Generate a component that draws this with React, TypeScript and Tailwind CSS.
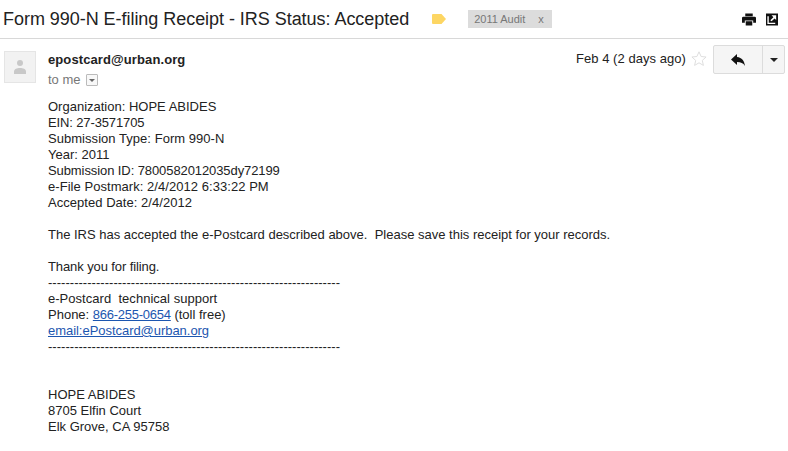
const rule = "-".repeat(67);

function Avatar() {
  return (
    <div className="flex h-[32px] w-[32px] shrink-0 items-end justify-center border border-[#e5e5e5] bg-[#f2f2f2]">
      <svg width="14" height="16" viewBox="0 0 14 16" className="mb-[7px]">
        <circle cx="7" cy="4" r="3" fill="#c8c8c8" />
        <path d="M1 15v-2.500C1 10 4 9 7 9s6 1 6 3.500V15z" fill="#c8c8c8" />
      </svg>
    </div>
  );
}

function ReplyButton() {
  return (
    <div className="flex h-[29px] items-stretch rounded-[2px] border border-[#dcdcdc] bg-[#f5f5f5]">
      <div className="flex w-[49px] items-center justify-center border-r border-[#dcdcdc]">
        <svg width="14" height="12" viewBox="0 0 14 12">
          <path d="M6 0v3c5 .5 7.300 3.800 8 9-1.800-3-4-4-8-4v3L0 5.500z" fill="#111" />
        </svg>
      </div>
      <div className="flex w-[21px] items-center justify-center">
        <div className="h-0 w-0 border-x-[4px] border-t-[4px] border-x-transparent border-t-[#222]" />
      </div>
    </div>
  );
}

export default function App() {
  return (
    <div className="h-[451px] w-[788px] overflow-hidden bg-white font-['Liberation_Sans',Arial,sans-serif] text-[#222]">
      <header className="flex h-[39px] items-center border-b border-[#d8d8d8] pl-[3px] pr-[10px]">
        <h1 className="text-[18px] leading-[24px] tracking-[-0.04px] text-[#222]">Form 990-N E-filing Receipt - IRS Status: Accepted</h1>
        <svg width="14" height="10" viewBox="0 0 14 10" className="ml-[23px]">
          <path d="M1 0h8.500L14 5l-4.500 5H1a1 1 0 0 1-1-1V1a1 1 0 0 1 1-1z" fill="#fdd663" />
        </svg>
        <div className="ml-[22px] flex h-[18px] w-[84px] items-center bg-[#dcdcdc] pl-[6px] text-[11px] text-[#777]">
          <span>2011 Audit</span>
          <span className="ml-[13px]">x</span>
        </div>
        <div className="ml-auto flex items-center gap-[10px]">
          <svg width="14" height="13" viewBox="0 0 15 13">
            <path d="M3.500 0h8v3h-8zM1.500 3.500h12A1.500 1.500 0 0 1 15 5v5h-3V7.500H3V10H0V5a1.500 1.500 0 0 1 1.500-1.500zM4 8.500h7V13H4z" fill="#111" />
          </svg>
          <svg width="12" height="13" viewBox="0 0 13 13">
            <path d="M0 0h13v13H0z" fill="#111" />
            <path d="M1.500 3v8.500H10V10H3V3z" fill="#fff" />
            <path d="M6 2h5v5L9.300 5.300 6 8.500 4.700 7.200 8 4z" fill="#fff" />
          </svg>
        </div>
      </header>

      <div className="flex pl-[4px] pr-[3px] pt-[12px]">
        <Avatar />
        <div className="ml-[12px] flex-1">
          <div className="pt-[1px] text-[13px] font-bold leading-[16px] tracking-[0.1px]">epostcard@urban.org</div>
          <div className="mt-[4px] flex items-center text-[13px] leading-[16px] text-[#777]">
            <span>to me</span>
            <span className="ml-[5px] flex h-[12px] w-[12px] items-center justify-center rounded-[1px] border border-[#bbb] bg-[#f8f8f8]">
              <span className="h-0 w-0 border-x-[3px] border-t-[3px] border-x-transparent border-t-[#666]" />
            </span>
          </div>
        </div>
        <div className="flex items-start">
          <span className="text-[13px] leading-[16px] tracking-[0.05px] text-[#222]">Feb 4 (2 days ago)</span>
          <svg width="16" height="15" viewBox="0 0 16 15" className="ml-[5px]">
            <path d="M8 .8l2.100 4.700 5 .5-3.800 3.400 1.100 5L8 11.800l-4.400 2.600 1.100-5L.9 6l5-.5z" fill="none" stroke="#dedede" />
          </svg>
          <div className="ml-[6px] -mt-[6px]">
            <ReplyButton />
          </div>
        </div>
      </div>

      <div className="mt-[11px] pl-[48px] text-[13px] leading-[16px] text-[#222]">
        <p>Organization: HOPE ABIDES</p>
        <p className="tracking-[-0.13px]">EIN: 27-3571705</p>
        <p className="tracking-[0.04px]">Submission Type: Form 990-N</p>
        <p>Year: 2011</p>
        <p className="tracking-[-0.09px]">Submission ID: 7800582012035dy72199</p>
        <p className="tracking-[0.05px]">e-File Postmark: 2/4/2012 6:33:22 PM</p>
        <p className="tracking-[0.04px]">Accepted Date: 2/4/2012</p>
        <p className="mt-[16px] whitespace-pre">The IRS has accepted the e-Postcard described above.  Please save this receipt for your records.</p>
        <p className="mt-[16px] tracking-[-0.1px]">Thank you for filing.</p>
        <p className="whitespace-pre tracking-[0.03px]">{rule}</p>
        <p className="whitespace-pre tracking-[0.03px]">e-Postcard  technical support</p>
        <p>
          Phone: <a className="tracking-[-0.25px] text-[#1c56b0] underline">866-255-0654</a> (toll free)
        </p>
        <p>
          <a className="tracking-[-0.04px] text-[#1c56b0] underline">email:ePostcard@urban.org</a>
        </p>
        <p className="whitespace-pre tracking-[0.03px]">{rule}</p>
        <p className="mt-[32px]">HOPE ABIDES</p>
        <p>8705 Elfin Court</p>
        <p>Elk Grove, CA 95758</p>
      </div>
    </div>
  );
}
